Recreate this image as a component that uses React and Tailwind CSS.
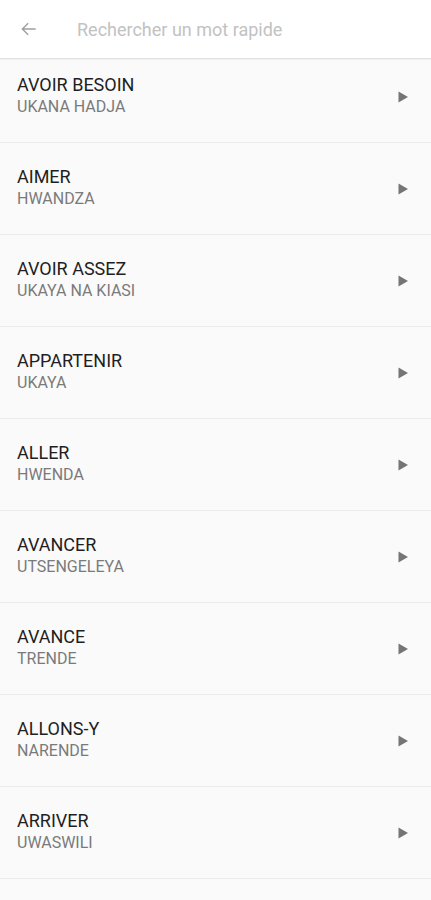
const words = [
  { fr: 'AVOIR BESOIN', tr: 'UKANA HADJA' },
  { fr: 'AIMER', tr: 'HWANDZA' },
  { fr: 'AVOIR ASSEZ', tr: 'UKAYA NA KIASI' },
  { fr: 'APPARTENIR', tr: 'UKAYA' },
  { fr: 'ALLER', tr: 'HWENDA' },
  { fr: 'AVANCER', tr: 'UTSENGELEYA' },
  { fr: 'AVANCE', tr: 'TRENDE' },
  { fr: 'ALLONS-Y', tr: 'NARENDE' },
  { fr: 'ARRIVER', tr: 'UWASWILI' },
];

const App = () => {
  return (
    <div className="h-[900px] overflow-hidden bg-[#fafafa] font-['Roboto',sans-serif]">
      {/* Search bar */}
      <div className="h-[59px] bg-white border-b border-[#e2e2e2] flex items-center shadow-[0_1px_1px_rgba(0,0,0,0.04)] relative z-10">
        <svg className="ml-[19px] w-[20px] h-[20px]" viewBox="0 0 24 24" fill="none" stroke="#9e9e9e" strokeWidth="1.6">
          <path d="M20 12H4.5M11 5l-7 7 7 7" />
        </svg>
        <span className="ml-[38px] text-[18px] text-[#c2c2c2]">Rechercher un mot rapide</span>
      </div>

      {/* Word list */}
      <div className="-mt-2">
        {words.map((w) => (
          <div
            key={w.fr}
            className="h-[92px] border-b border-[#ececec] flex items-start justify-between pl-[17px] pr-[22px]"
          >
            <div className="pt-[23px]">
              <div className="text-[18px] leading-[22px] text-[#1f1f1f]">{w.fr}</div>
              <div className="text-[16px] leading-[22px] text-[#7a7a7a]">{w.tr}</div>
            </div>
            <svg className="mt-[40px] w-[12px] h-[12px]" viewBox="0 0 12 12">
              <path d="M1.5 0.5 L11 6 L1.5 11.5 Z" fill="#757575" />
            </svg>
          </div>
        ))}
      </div>
    </div>
  );
};

export default App;
